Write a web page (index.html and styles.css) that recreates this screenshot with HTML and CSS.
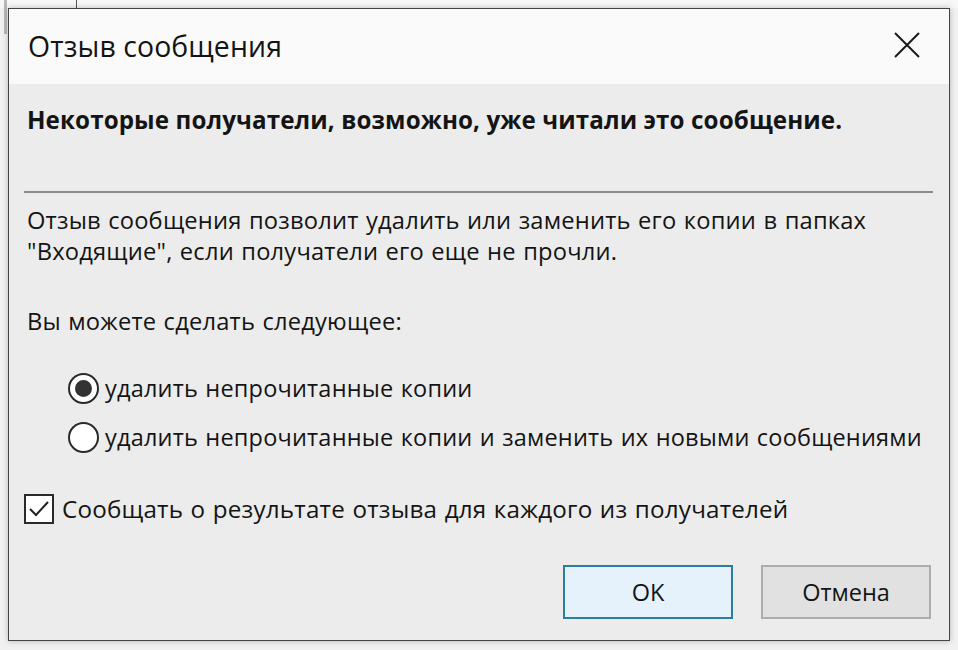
FILE: index.html
```html
<!DOCTYPE html>
<html lang="ru">
<head>
<meta charset="utf-8">
<title>Отзыв сообщения</title>
<link rel="stylesheet" href="styles.css">
</head>
<body>
<div class="backdrop">
  <div class="bg-strip"><span class="bg-tab"></span></div>
  <div class="dialog">
    <div class="titlebar">
      <span class="title">Отзыв сообщения</span>
      <button class="close" aria-label="Закрыть">
        <svg width="26" height="26" viewBox="0 0 26 26"><path d="M1 1 L25 25 M25 1 L1 25" stroke="#1a1a1a" stroke-width="2" fill="none"/></svg>
      </button>
    </div>
    <div class="content">
      <p class="warning">Некоторые получатели, возможно, уже читали это сообщение.</p>
      <hr class="sep">
      <p class="text">Отзыв сообщения позволит удалить или заменить его копии в папках<br>"Входящие", если получатели его еще не прочли.</p>
      <p class="text prompt">Вы можете сделать следующее:</p>
      <div class="options">
        <div class="option"><span class="radio checked"></span><span>удалить непрочитанные копии</span></div>
        <div class="option"><span class="radio"></span><span>удалить непрочитанные копии и заменить их новыми сообщениями</span></div>
      </div>
      <div class="check-row">
        <span class="checkbox"><svg width="22" height="18" viewBox="0 0 22 18"><path d="M2 9 L8 15 L20 2" stroke="#222" stroke-width="2" fill="none"/></svg></span>
        <span>Сообщать о результате отзыва для каждого из получателей</span>
      </div>
      <div class="buttons">
        <button class="btn primary">OK</button>
        <button class="btn">Отмена</button>
      </div>
    </div>
  </div>
</div>
</body>
</html>
```
FILE: styles.css
```css
html, body {
  margin: 0;
  padding: 0;
  background: #f3f3f3;
  font-family: "Open Sans", "Noto Sans", sans-serif;
  color: #141414;
}
.backdrop {
  position: relative;
  width: 958px;
  height: 650px;
  overflow: hidden;
  background: #f1f1f1;
}
.bg-strip {
  position: absolute;
  left: 0;
  top: 0;
  width: 958px;
  height: 8px;
  background: #f7f7f7;
}
.bg-tab {
  position: absolute;
  left: 4px;
  top: 0;
  width: 73px;
  height: 34px;
  border-left: 3px solid #b9b9b9;
  border-right: 1px solid #555;
  box-sizing: border-box;
}
.dialog {
  position: absolute;
  left: 8px;
  top: 8px;
  width: 942px;
  height: 633px;
  box-sizing: border-box;
  border: 1px solid #444;
  background: #ececec;
  display: flex;
  flex-direction: column;
  box-shadow: 0 0 6px rgba(0,0,0,0.25);
}
.titlebar {
  height: 75px;
  background: #fafafa;
  display: flex;
  align-items: center;
  justify-content: space-between;
  padding: 0 29px 0 19px;
  flex: none;
}
.title {
  font-size: 28.4px;
  font-weight: 400;
  letter-spacing: 0.1px;
  padding-bottom: 2px;
}
.close {
  border: none;
  background: transparent;
  padding: 0;
  width: 26px;
  height: 26px;
  margin-bottom: 4px;
}
.content {
  flex: 1;
  display: flex;
  flex-direction: column;
  padding: 0 18px 0 15px;
}
.warning {
  margin: 20px 0 0 3px;
  font-size: 24.2px;
  font-weight: 700;
  line-height: 32px;
  letter-spacing: 0.1px;
}
.sep {
  margin: 55px -2px 0 0;
  border: none;
  border-top: 2px solid #8a8a8a;
  height: 0;
}
.text {
  margin: 12px 0 0 3px;
  font-size: 23.7px;
  line-height: 31px;
  letter-spacing: 0.2px;
  word-spacing: 1px;
}
.prompt {
  margin-top: 39px;
}
.options {
  display: flex;
  flex-direction: column;
  gap: 17px;
  margin: 35px 0 0 44px;
  font-size: 23.5px;
}
.option, .check-row {
  display: flex;
  align-items: center;
  letter-spacing: 0.2px;
  word-spacing: 1px;
  line-height: 32px;
}
.radio {
  width: 31px;
  height: 31px;
  box-sizing: border-box;
  border: 2px solid #2a2a2a;
  border-radius: 50%;
  background: #fff;
  margin-right: 6px;
  display: flex;
  align-items: center;
  justify-content: center;
  flex: none;
}
.radio.checked::after {
  content: "";
  width: 17px;
  height: 17px;
  border-radius: 50%;
  background: #333;
}
.check-row {
  margin-top: 40px;
  font-size: 24.2px;
}
.checkbox {
  width: 30px;
  height: 30px;
  box-sizing: border-box;
  border: 2px solid #2a2a2a;
  background: #fff;
  margin-right: 8px;
  display: flex;
  align-items: center;
  justify-content: center;
  flex: none;
}
.buttons {
  margin-top: auto;
  margin-bottom: 21px;
  display: flex;
  justify-content: flex-end;
  gap: 28px;
}
.btn {
  width: 170px;
  height: 54px;
  box-sizing: border-box;
  border: 2px solid #adadad;
  background: #e1e1e1;
  font-family: "Open Sans", "Noto Sans", sans-serif;
  font-size: 23.5px;
  color: #141414;
  padding: 0;
}
.btn.primary {
  border-color: #2b7ea3;
  background: #e5f1fb;
}
```
